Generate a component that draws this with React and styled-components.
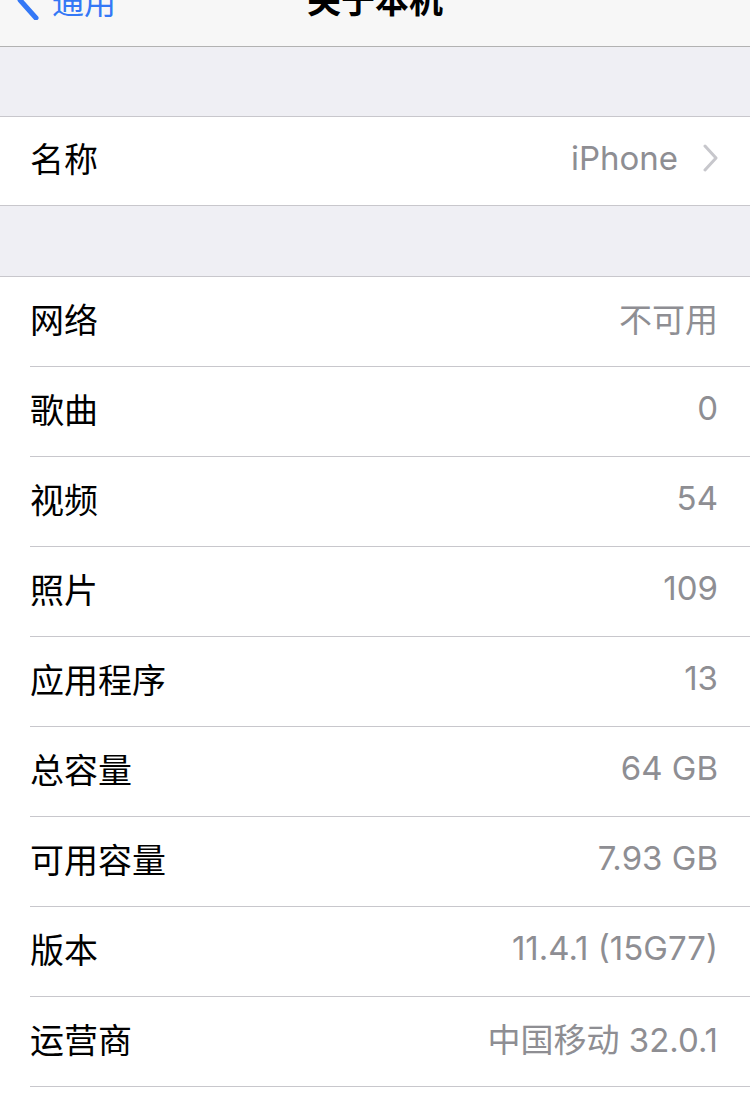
import React from "react";
import styled, { createGlobalStyle } from "styled-components";

const GlobalStyle = createGlobalStyle`
    html, body {
        margin: 0;
        padding: 0;
        background: #efeff4;
    }
    body {
        font-family: "Inter", "Noto Sans CJK SC", sans-serif;
        -webkit-font-smoothing: antialiased;
    }
`;

const rows = [
    { label: "网络", value: "不可用" },
    { label: "歌曲", value: "0" },
    { label: "视频", value: "54" },
    { label: "照片", value: "109" },
    { label: "应用程序", value: "13" },
    { label: "总容量", value: "64 GB" },
    { label: "可用容量", value: "7.93 GB" },
    { label: "版本", value: "11.4.1 (15G77)" },
    { label: "运营商", value: "中国移动 32.0.1" },
];

const BackIcon = () => (
    <svg width="24" height="40" viewBox="0 0 24 40" fill="none">
        <path
            d="M20 2 L4 20 L20 38"
            stroke="#3478f6"
            strokeWidth="5"
            strokeLinecap="round"
            strokeLinejoin="round"
        />
    </svg>
);

const Chevron = () => (
    <svg width="16" height="28" viewBox="0 0 16 28" fill="none">
        <path
            d="M3 2 L14 14 L3 26"
            stroke="#c7c7cc"
            strokeWidth="3"
            strokeLinecap="round"
            strokeLinejoin="round"
        />
    </svg>
);

const App = () => {
    return (
        <Page>
            <GlobalStyle />
            <NavBar>
                <BackButton>
                    <BackIcon />
                    <span>通用</span>
                </BackButton>
                <Title>关于本机</Title>
            </NavBar>
            <Spacer height={69} />
            <Group>
                <Row height={88}>
                    <Label>名称</Label>
                    <Value>
                        iPhone
                        <Chevron />
                    </Value>
                </Row>
            </Group>
            <Spacer height={70} />
            <Group>
                {rows.map((item) => (
                    <Row key={item.label} height={89} divided>
                        <Label>{item.label}</Label>
                        <Value>{item.value}</Value>
                    </Row>
                ))}
                <Tail />
            </Group>
        </Page>
    );
};

export default App;

const Page = styled.div`
    width: 750px;
    height: 1099px;
    overflow: hidden;
    background: #efeff4;
`;

const NavBar = styled.div`
    position: relative;
    height: 46px;
    background: #f7f7f7;
    border-bottom: 1px solid #b2b2b2;
    overflow: hidden;
    display: flex;
    justify-content: center;
`;

const BackButton = styled.div`
    position: absolute;
    left: 16px;
    top: -20px;
    display: flex;
    align-items: center;
    gap: 12px;
    color: #3478f6;
    font-family: "Noto Sans CJK SC", sans-serif;
    font-size: 32px;
    line-height: 40px;
`;

const Title = styled.div`
    margin-top: -21px;
    font-family: "Noto Sans CJK SC", sans-serif;
    font-size: 34px;
    font-weight: 600;
    line-height: 40px;
    color: #000;
`;

const Spacer = styled.div`
    height: ${(p) => p.height}px;
`;

const Group = styled.div`
    background: #fff;
    border-top: 1px solid #c8c7cc;
    border-bottom: 1px solid #c8c7cc;
`;

const Row = styled.div`
    box-sizing: border-box;
    height: ${(p) => p.height}px;
    margin-left: 30px;
    padding: 0 30px 7px 0;
    display: flex;
    align-items: center;
    justify-content: space-between;
    ${(p) =>
        p.divided &&
        `
        & + & {
            border-top: 1px solid #c8c7cc;
            height: ${p.height + 1}px;
        }
    `}
`;

const Tail = styled.div`
    height: 40px;
    margin-left: 30px;
    border-top: 1px solid #c8c7cc;
`;

const Label = styled.span`
    font-family: "Noto Sans CJK SC", sans-serif;
    font-size: 34px;
    color: #000;
`;

const Value = styled.span`
    display: flex;
    align-items: center;
    gap: 24px;
    font-family: "Inter", "Noto Sans CJK SC", sans-serif;
    font-size: 33px;
    color: #8e8e93;
    margin-right: 2px;
`;
